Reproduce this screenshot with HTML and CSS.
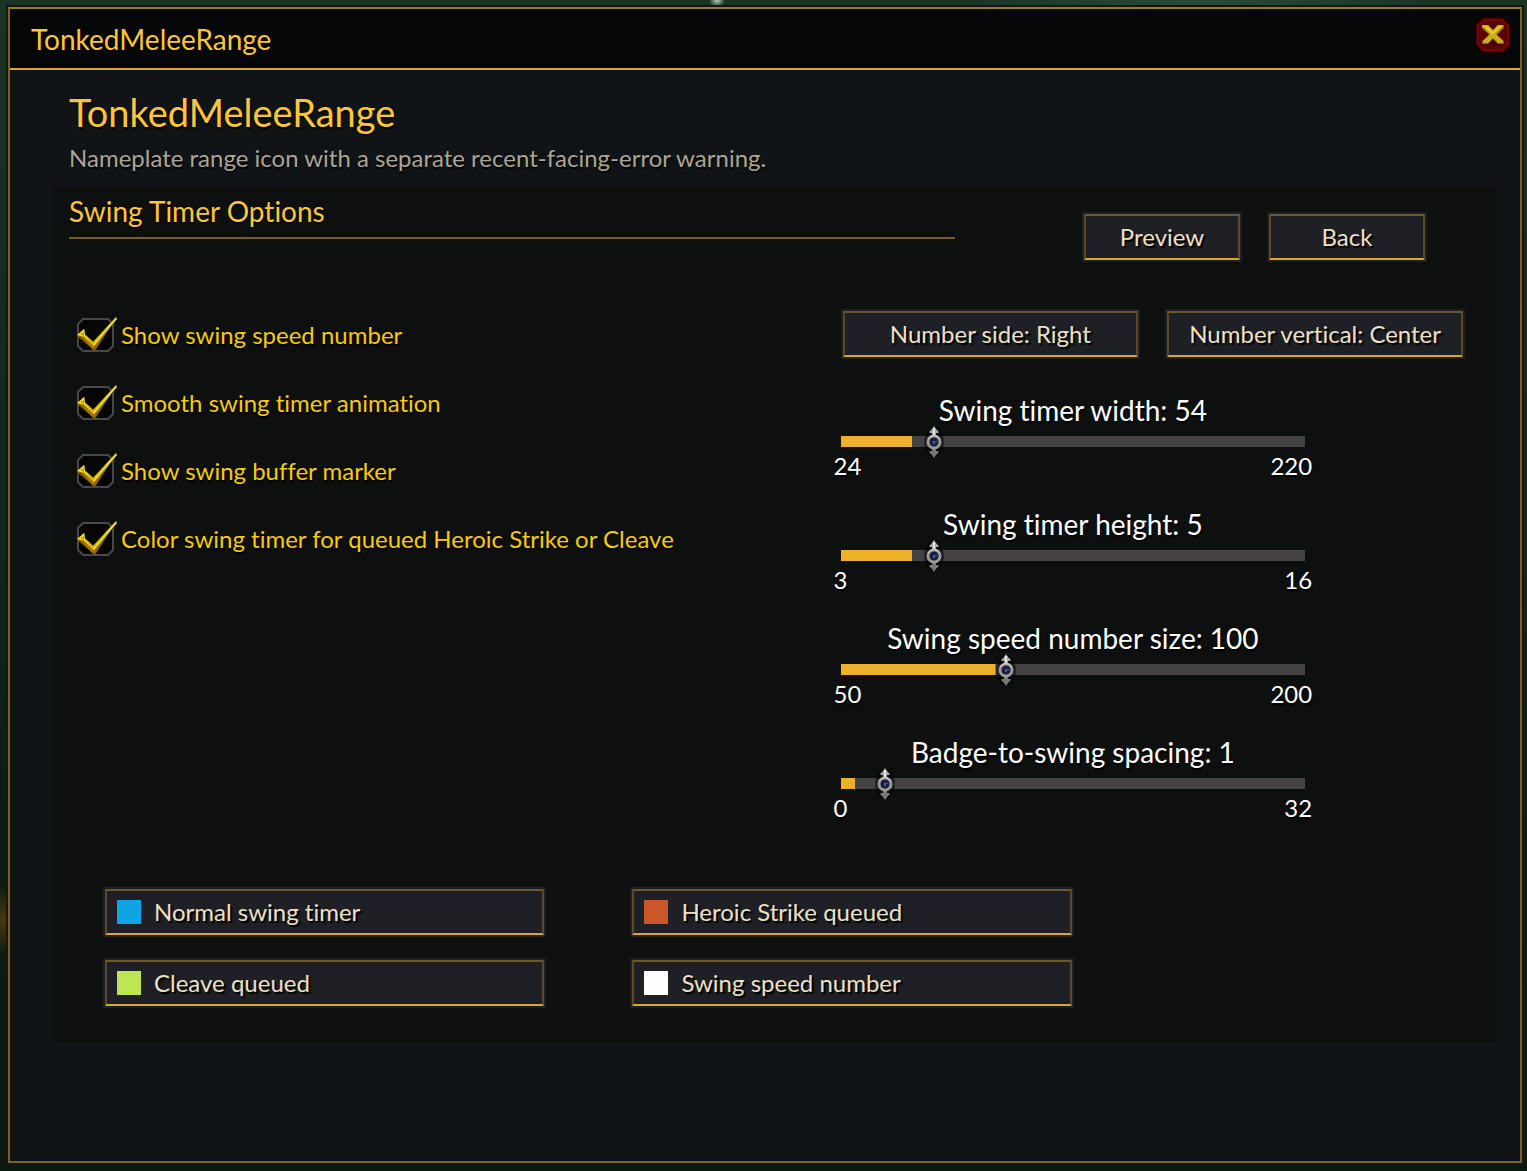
FILE: index.html
```html
<!DOCTYPE html>
<html lang="en">

<head>
  <meta charset="UTF-8">
  <meta name="viewport" content="width=device-width, initial-scale=1.0">
  <title>TonkedMeleeRange</title>
  <link rel="stylesheet" href="styles.css">
</head>

<body>
  <div class="window">
    <header class="title-bar">
      <span class="title-text">TonkedMeleeRange</span>
      <button type="button" class="close" aria-label="Close">
        <svg viewBox="0 0 40 40" width="40" height="40" aria-hidden="true">
          <path d="M9 1H31L39 9V31L31 39H9L1 31V9Z" fill="#150203"/>
          <path d="M10 3H30L37 10V30L30 37H10L3 30V10Z" fill="#480204"/>
          <path d="M11 5H29L35 11V29L29 35H11L5 29V11Z" fill="#5c0204" stroke="#740608" stroke-width="2"/>
          <path d="M11 10L30 10V13L24 20L30 27V30H11V27L17 20L11 13Z" fill="#430203"/>
          <path d="M9 10H15L20 15L25 10H31V13L24 20L31 26V29H25L20 24L15 29H9V26L16 20L9 13Z" fill="#80600a"/>
          <path d="M9 10H15L20 15L25 10H30V12L23 19L30 26V28H25L20 23L15 28H10V26L17 19L9 12Z" fill="#cfae1c"/>
          <path d="M11 11H14L20 17L26 11H28L20 20Z" fill="#e6cd30"/>
        </svg>
      </button>
    </header>

    <main>
      <h1>TonkedMeleeRange</h1>
      <p class="subtitle">Nameplate range icon with a separate recent-facing-error warning.</p>

      <form class="panel" autocomplete="off">
        <div class="panel-head">
          <h2>Swing Timer Options</h2>
          <button type="button" class="btn">Preview</button>
          <button type="button" class="btn">Back</button>
        </div>

        <div class="options">
          <div class="checks">
            <label class="check"><input type="checkbox" name="speedNumber" checked>Show swing speed number</label>
            <label class="check"><input type="checkbox" name="smooth" checked>Smooth swing timer animation</label>
            <label class="check"><input type="checkbox" name="buffer" checked>Show swing buffer marker</label>
            <label class="check"><input type="checkbox" name="queued" checked>Color swing timer for queued Heroic Strike or Cleave</label>
          </div>

          <div class="settings">
            <div class="sides">
              <button type="button" class="btn">Number side: Right</button>
              <button type="button" class="btn">Number vertical: Center</button>
            </div>

            <div class="slider">
              <label for="width">Swing timer width: <output>54</output></label>
              <input type="range" id="width" min="24" max="220" value="54" style="--fill: 15.3%">
              <div class="limits"><span>24</span><span>220</span></div>
            </div>
            <div class="slider">
              <label for="height">Swing timer height: <output>5</output></label>
              <input type="range" id="height" min="3" max="16" value="5" style="--fill: 15.4%">
              <div class="limits"><span>3</span><span>16</span></div>
            </div>
            <div class="slider">
              <label for="size">Swing speed number size: <output>100</output></label>
              <input type="range" id="size" min="50" max="200" value="100" style="--fill: 33.3%">
              <div class="limits"><span>50</span><span>200</span></div>
            </div>
            <div class="slider">
              <label for="spacing">Badge-to-swing spacing: <output>1</output></label>
              <input type="range" id="spacing" min="0" max="32" value="1" style="--fill: 3.1%">
              <div class="limits"><span>0</span><span>32</span></div>
            </div>
          </div>
        </div>

        <div class="colors">
          <button type="button" class="btn color"><span class="swatch blue"></span>Normal swing timer</button>
          <button type="button" class="btn color"><span class="swatch orange"></span>Heroic Strike queued</button>
          <button type="button" class="btn color"><span class="swatch green"></span>Cleave queued</button>
          <button type="button" class="btn color"><span class="swatch white"></span>Swing speed number</button>
        </div>
      </form>
    </main>
  </div>

  <script>
    // keep the filled part and the number in step with the slider
    document.querySelectorAll('.slider input').forEach(function (input) {
      input.addEventListener('input', function () {
        var part = (input.value - input.min) / (input.max - input.min);
        input.style.setProperty('--fill', part * 100 + '%');
        input.parentNode.querySelector('output').textContent = input.value;
      });
    });
  </script>
</body>

</html>
```
FILE: styles.css
```css
* {
  box-sizing: border-box;
}

body {
  margin: 0;
  padding: 7px 5px 8px 8px;
  min-height: 100vh;
  display: flex;
  font-family: Lato, "Open Sans", sans-serif;
  font-size: 24px;
  font-variant-ligatures: none;
  line-height: 28px;
  color: #fff;
  text-shadow: 1px 2px 1px #000;
  background:
    radial-gradient(circle at 717px 0, #b9cdbb 0, transparent 8px),
    radial-gradient(ellipse at 0 920px, #4a3510 0, transparent 60px),
    radial-gradient(ellipse at 1200px 0, #2a4b33 0, transparent 240px),
    linear-gradient(#1b3327, #12271b 40%, #0b1c12 75%, #0c1a12);
}

.window {
  flex: 1;
  display: flex;
  flex-direction: column;
  border: 2px solid #7d6123;
  border-top-color: #997a27;
  box-shadow: 0 0 0 2px #10181a;
  background: #111416;
}

.title-bar {
  display: flex;
  align-items: center;
  justify-content: space-between;
  height: 61px;
  padding: 0 7px 0 21px;
  border-bottom: 2px solid #dba82f;
  background: #050709;
}

.title-text {
  font-size: 28px;
  color: #ffc737;
}

.close {
  width: 40px;
  height: 40px;
  margin-bottom: 8px;
  padding: 0;
  border: none;
  background: none;
  cursor: pointer;
}

.close svg {
  display: block;
}

main {
  flex: 1;
  padding: 20px 25px 0 42px;
}

h1 {
  margin: 0 17px;
  font-size: 38px;
  font-weight: normal;
  line-height: 44px;
  color: #ffc737;
}

.subtitle {
  margin: 10px 17px 14px;
  color: #aca595;
}

.panel {
  min-height: 857px;
  background: #0e1010;
}

.panel-head {
  display: flex;
  align-items: flex-end;
  gap: 29px;
  padding: 11px 70px 0 17px;
}

.panel-head h2 {
  flex: 1;
  margin: 0 100px 21px 0;
  padding-bottom: 12px;
  border-bottom: 2px solid #745c22;
  font-size: 28px;
  font-weight: normal;
  color: #ffc737;
}

.panel-head .btn {
  width: 156px;
}

.btn {
  height: 46px;
  padding: 0;
  border: 2px solid #5b4826;
  border-top-color: #6f592a;
  border-bottom-color: #dba82f;
  box-shadow: 0 0 0 2px #1b1e23;
  background: #1f2025;
  font: inherit;
  color: #ece0c5;
  text-shadow: 2px 2px 1px #000;
  cursor: pointer;
}

.options {
  display: grid;
  grid-template-columns: 7fr 6fr;
  padding: 51px 0 0 25px;
}

.check {
  display: flex;
  align-items: center;
  height: 68px;
  color: #f7cb05;
}

.checks {
  margin-top: -10px;
}

.check input {
  appearance: none;
  width: 44px;
  height: 40px;
  margin: 0;
  background: url("data:image/svg+xml,%3Csvg xmlns='http://www.w3.org/2000/svg' viewBox='0 0 44 40'%3E%3Cpath d='M5 4H32L36 8V32L32 36H5L1 32V8Z' fill='%23060606' stroke='%23505050' stroke-width='2'/%3E%3C/svg%3E") no-repeat;
}

.check input:checked {
  background-image: url("data:image/svg+xml,%3Csvg xmlns='http://www.w3.org/2000/svg' viewBox='0 0 44 40'%3E%3Cpath d='M6 4H31L36 9V31L31 36H6L1 31V9Z' fill='%23060606' stroke='%23484848' stroke-width='2'/%3E%3Cpath d='M0 21L8 14V19L17 27L39 3L18 36Z' fill='%23825b08'/%3E%3Cpath d='M3 20L16 35L27 20L17 30Z' fill='%23a8740b'/%3E%3Cpath d='M0 20L7 14L8 20L16 27L39 2L40 4L17 31L7 22Z' fill='%23ece01b'/%3E%3Cpath d='M3 19L7 17V21L16 29L32 11L16 27Z' fill='%23c9a311'/%3E%3C/svg%3E");
}

.sides {
  display: grid;
  grid-template-columns: 1fr 1fr;
  gap: 29px;
  padding: 0 32px 0 2px;
  margin-bottom: 39px;
}

.slider {
  width: 71%;
  height: 114px;
}

.slider label {
  display: block;
  text-align: center;
  font-size: 28px;
}

.slider input {
  appearance: none;
  display: block;
  width: 100%;
  height: 11px;
  margin: 12px 0 10px;
  background: linear-gradient(#ecb02a, #ecb02a) 0 0 / var(--fill) 100% no-repeat, #444243;
}

/* the handle is wide, the drawn pin only sits in its middle */
.slider input::-webkit-slider-thumb {
  appearance: none;
  width: 64px;
  height: 36px;
  background: url("data:image/svg+xml,%3Csvg xmlns='http://www.w3.org/2000/svg' viewBox='0 0 64 36'%3E%3Cellipse cx='32' cy='18' rx='10' ry='15' fill='%23000' opacity='.5'/%3E%3Cpath d='M32 2L34 5L37 8L36 9H34V12H30V9H28L27 8L30 5Z' fill='%23aaa'/%3E%3Cpath d='M30 24H34V27H36L37 28L34 31L32 34L30 31L27 28L28 27H30Z' fill='%23777'/%3E%3Cpath d='M31 4H33V11H31Z' fill='%23e4e4e4'/%3E%3Ccircle cx='32' cy='18' r='6' fill='%2311131e' stroke='%23999' stroke-width='3'/%3E%3Cpath d='M26 15Q32 8 38 15' fill='none' stroke='%23ddd' stroke-width='1'/%3E%3Ccircle cx='32' cy='18' r='4' fill='%231a1e48'/%3E%3Cpath d='M31 17H35V18H33V20H31Z' fill='%23535a80'/%3E%3C/svg%3E") no-repeat;
}

.limits {
  display: flex;
  justify-content: space-between;
  margin: 0 -7px;
  line-height: 17px;
}

.colors {
  display: grid;
  grid-template-columns: 1fr 1fr;
  gap: 25px 88px;
  width: 67%;
  margin: 37px 0 0 53px;
}

.color {
  display: flex;
  align-items: center;
  gap: 13px;
  padding-left: 10px;
}

.swatch {
  width: 24px;
  height: 24px;
}

.blue {
  background: #0ca4e3;
}

.orange {
  background: #c9572b;
}

.green {
  background: #bee552;
}

.white {
  background: #fff;
}
```
